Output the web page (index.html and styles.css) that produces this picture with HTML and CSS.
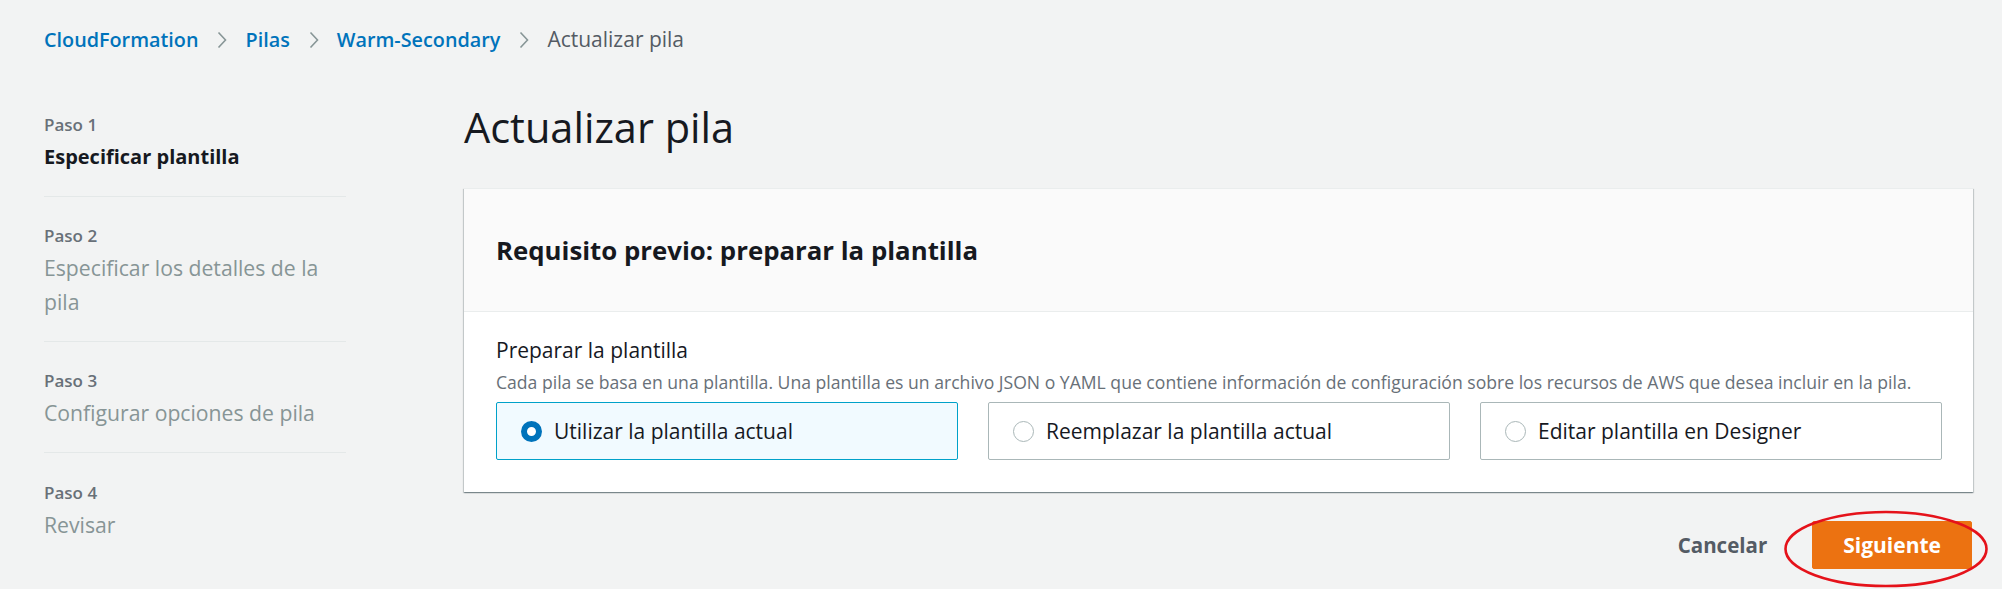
FILE: index.html
```html
<!DOCTYPE html>
<html lang="es">
<head>
<meta charset="utf-8">
<title>Actualizar pila</title>
<link rel="stylesheet" href="styles.css">
</head>
<body>
<nav class="breadcrumbs">
  <a class="crumb-link" href="#">CloudFormation</a>
  <span class="chev"><svg width="10" height="18" viewBox="0 0 10 18"><polyline points="1.5,1.5 8.5,9 1.5,16.5" fill="none" stroke="#879596" stroke-width="1.6"/></svg></span>
  <a class="crumb-link" href="#">Pilas</a>
  <span class="chev"><svg width="10" height="18" viewBox="0 0 10 18"><polyline points="1.5,1.5 8.5,9 1.5,16.5" fill="none" stroke="#879596" stroke-width="1.6"/></svg></span>
  <a class="crumb-link" href="#">Warm-Secondary</a>
  <span class="chev"><svg width="10" height="18" viewBox="0 0 10 18"><polyline points="1.5,1.5 8.5,9 1.5,16.5" fill="none" stroke="#879596" stroke-width="1.6"/></svg></span>
  <span class="crumb-current">Actualizar pila</span>
</nav>

<div class="layout">
  <aside class="steps">
    <ol class="step-list">
      <li class="step">
        <div class="step-num">Paso 1</div>
        <div class="step-title step-active">Especificar plantilla</div>
      </li>
      <li class="step">
        <div class="step-num">Paso 2</div>
        <div class="step-title">Especificar los detalles de la pila</div>
      </li>
      <li class="step">
        <div class="step-num">Paso 3</div>
        <div class="step-title">Configurar opciones de pila</div>
      </li>
      <li class="step step-last">
        <div class="step-num">Paso 4</div>
        <div class="step-title">Revisar</div>
      </li>
    </ol>
  </aside>

  <main class="main">
    <h1 class="page-title">Actualizar pila</h1>

    <section class="card">
      <header class="card-header">
        <h2 class="card-title">Requisito previo: preparar la plantilla</h2>
      </header>
      <div class="card-body">
        <div class="field-label">Preparar la plantilla</div>
        <div class="field-desc">Cada pila se basa en una plantilla. Una plantilla es un archivo JSON o YAML que contiene información de configuración sobre los recursos de AWS que desea incluir en la pila.</div>
        <div class="tiles">
          <div class="tile tile-selected"><span class="radio radio-checked"></span><span class="tile-text">Utilizar la plantilla actual</span></div>
          <div class="tile"><span class="radio"></span><span class="tile-text">Reemplazar la plantilla actual</span></div>
          <div class="tile"><span class="radio"></span><span class="tile-text">Editar plantilla en Designer</span></div>
        </div>
      </div>
    </section>

    <div class="actions">
      <button class="btn-link" type="button">Cancelar</button>
      <button class="btn-primary" type="button">Siguiente</button>
    </div>
  </main>
</div>

<svg class="annotation" width="210" height="82" viewBox="0 0 210 82"><ellipse cx="105" cy="40" rx="100.5" ry="37" fill="none" stroke="#e5121a" stroke-width="2.6"/></svg>
</body>
</html>
```

FILE: styles.css
```css
html, body {
  margin: 0;
  padding: 0;
  overflow: hidden;
}

body {
  background: #f2f3f3;
  font-family: "Open Sans", "Noto Sans", Arial, sans-serif;
  font-size: 21px;
  line-height: 33px;
  color: #16191f;
  position: relative;
  min-height: 589px;
}

/* Breadcrumbs */
.breadcrumbs {
  display: flex;
  align-items: center;
  padding: 23px 0 0 44px;
  height: 33px;
}

.crumb-link {
  color: #0073bb;
  font-weight: 600;
  font-size: 19.8px;
  text-decoration: none;
}

.crumb-current {
  color: #545b64;
  font-size: 21px;
}

.chev {
  display: flex;
  align-items: center;
  margin: 0 18px 0 19px;
}

/* Layout */
.layout {
  display: grid;
  grid-template-columns: 302px 1fr;
  column-gap: 118px;
  padding: 0 29px 0 44px;
}

/* Steps nav */
.steps {
  padding-top: 29px;
}

.step-list {
  list-style: none;
  margin: 0;
  padding: 0;
}

.step {
  padding: 27.5px 0 22.5px;
  border-bottom: 1px solid #e4e8e8;
}

.step-last {
  border-bottom: none;
}

.step-num {
  font-size: 17px;
  line-height: 23px;
  font-weight: 600;
  color: #687078;
}

.step-title {
  margin-top: 4px;
  font-size: 21.2px;
  line-height: 33.5px;
  color: #879596;
}

.step-active {
  color: #16191f;
  font-weight: 700;
  font-size: 20px;
}

/* Main */
.main {
  padding-top: 46px;
}

.page-title {
  margin: 0;
  font-size: 41.5px;
  line-height: 51px;
  font-weight: 400;
  color: #16191f;
}

.card {
  margin-top: 35px;
  background: #ffffff;
  border-top: 1px solid #eaeded;
  box-shadow: 0 1px 1px 0 rgba(0, 28, 36, 0.3), 1px 1px 1px 0 rgba(0, 28, 36, 0.15), -1px 1px 1px 0 rgba(0, 28, 36, 0.15);
}

.card-header {
  background: #fafafa;
  padding: 45px 32px 45px;
  border-bottom: 1px solid #eaeded;
}

.card-title {
  margin: 0;
  font-size: 25.8px;
  line-height: 32px;
  font-weight: 700;
  color: #16191f;
}

.card-body {
  padding: 22px 31px 32px 32px;
}

.field-label {
  font-size: 21px;
  line-height: 33px;
  color: #16191f;
}

.field-desc {
  margin-top: 3px;
  font-size: 17.6px;
  line-height: 24px;
  color: #687078;
}

.tiles {
  margin-top: 8px;
  display: grid;
  grid-template-columns: repeat(3, 1fr);
  column-gap: 30px;
}

.tile {
  height: 58px;
  box-sizing: border-box;
  display: flex;
  align-items: center;
  gap: 12px;
  padding-left: 24px;
  border: 1px solid #aab7b8;
  border-radius: 2px;
  background: #ffffff;
}

.tile-selected {
  border-color: #00a1c9;
  background: #f1faff;
}

.tile-text {
  font-size: 21px;
  line-height: 33px;
  color: #16191f;
}

.radio {
  width: 21px;
  height: 21px;
  box-sizing: border-box;
  border-radius: 50%;
  border: 1px solid #aab7b8;
  background: #ffffff;
  flex: none;
}

.radio-checked {
  border: 6px solid #0073bb;
}

/* Actions */
.actions {
  margin-top: 29px;
  display: flex;
  justify-content: flex-end;
  align-items: center;
  gap: 24px;
  padding-right: 1px;
}

.btn-link {
  font-family: inherit;
  font-size: 20.5px;
  line-height: 30px;
  font-weight: 700;
  color: #545b64;
  background: transparent;
  border: 1px solid transparent;
  padding: 8px 20px;
  cursor: pointer;
}

.btn-primary {
  font-family: inherit;
  font-size: 21px;
  line-height: 30px;
  font-weight: 700;
  color: #ffffff;
  background: #ec7211;
  border: 1px solid #ec7211;
  border-radius: 2px;
  padding: 8px 30px;
  cursor: pointer;
}

/* Red annotation ring */
.annotation {
  position: absolute;
  left: 1781px;
  top: 509px;
  pointer-events: none;
}
```
